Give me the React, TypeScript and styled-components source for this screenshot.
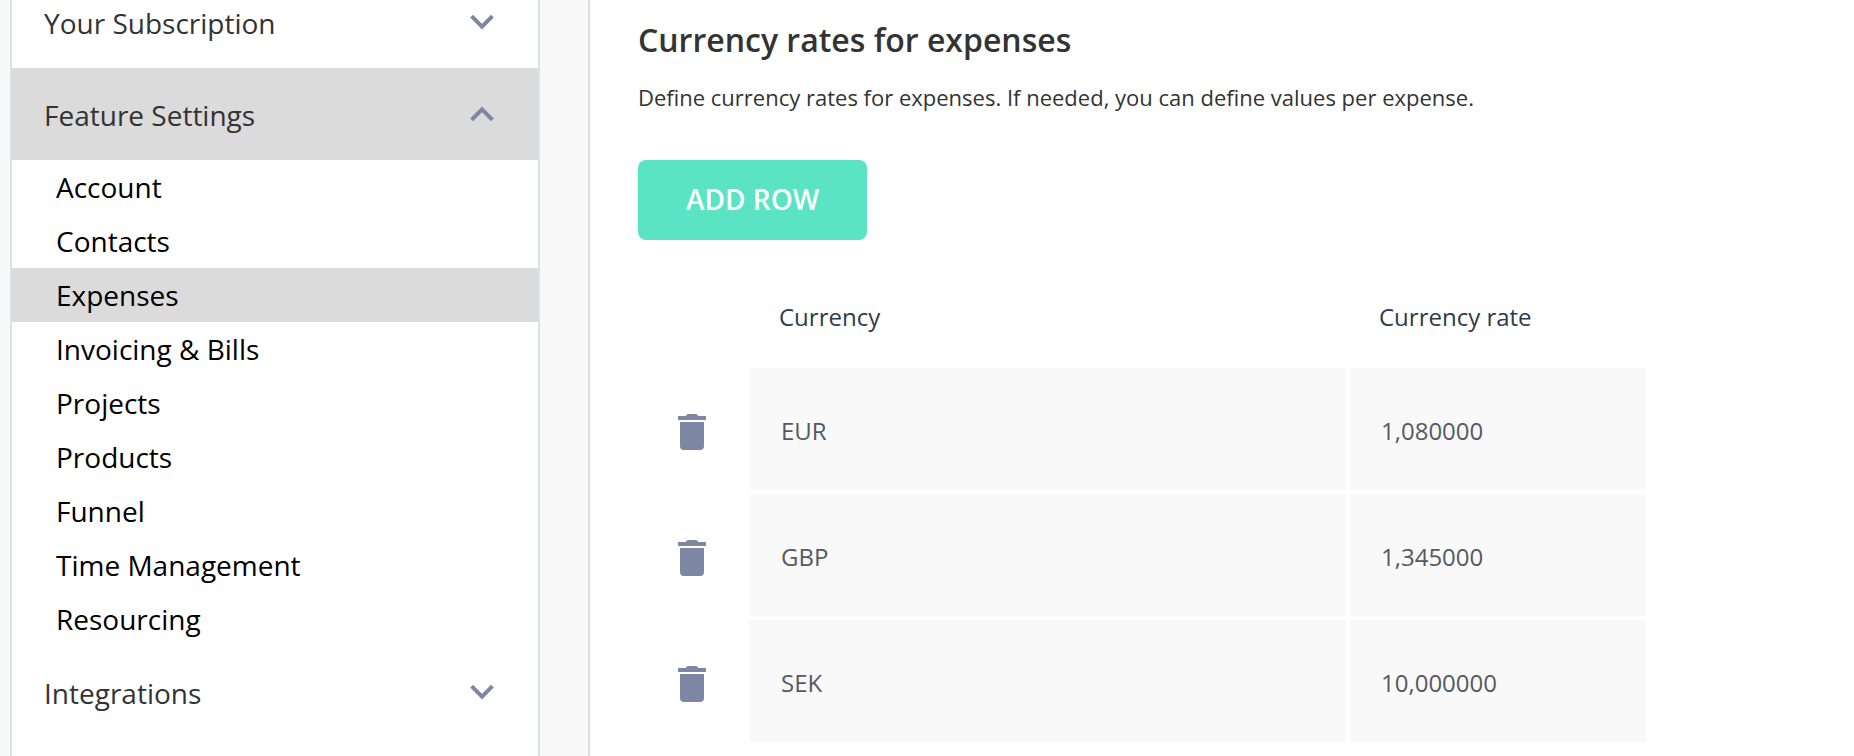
import React, { useState } from "react";
import styled, { createGlobalStyle } from "styled-components";

const GlobalStyle = createGlobalStyle`
  *, *::before, *::after { box-sizing: border-box; }
  html, body { margin: 0; padding: 0; }
  body {
    background: #f9f9f9;
    color: #333333;
    font-family: "Open Sans", "Noto Sans", sans-serif;
    overflow: hidden;
  }
`;

const Layout = styled.div`
  display: flex;
  align-items: stretch;
  gap: 48px;
  height: 100vh;
  padding-left: 10px;
  overflow: hidden;
`;

const Sidebar = styled.nav`
  flex: 0 0 530px;
  margin-top: -24px;
  background: #ffffff;
  border: solid #dde1ea;
  border-width: 0 2px;
`;

const SectionButton = styled.button<{ $open: boolean }>`
  display: flex;
  align-items: center;
  justify-content: space-between;
  width: 100%;
  padding: 28px 44px 26px 32px;
  border: 0;
  background: ${({ $open }) => ($open ? "#dbdbdb" : "#ffffff")};
  color: #333333;
  font: inherit;
  font-size: 28px;
  line-height: 38px;
  text-align: left;
  cursor: pointer;
`;

const ChevronIcon = styled.svg<{ $up: boolean }>`
  width: 24px;
  height: 18px;
  margin-bottom: 2px;
  fill: none;
  stroke: #7d87a3;
  stroke-width: 4;
  transform: ${({ $up }) => ($up ? "rotate(180deg)" : "none")};
`;

const LinkList = styled.ul`
  margin: 0;
  padding: 0;
  list-style: none;
`;

const SideLink = styled.a<{ $active: boolean }>`
  display: block;
  padding: 8px 44px;
  background: ${({ $active }) => ($active ? "#dbdbdb" : "transparent")};
  color: #000000;
  font-size: 28px;
  line-height: 38px;
  text-decoration: none;
`;

const Panel = styled.main`
  flex: 1;
  min-width: 0;
  padding: 18px 48px 0;
  background: #ffffff;
  border-left: 2px solid #dde1ea;
`;

const Title = styled.h1`
  margin: 0 0 20px;
  font-size: 32px;
  font-weight: 600;
  line-height: 44px;
`;

const Description = styled.p`
  margin: 0 0 48px;
  font-size: 22px;
  line-height: 30px;
`;

const AddButton = styled.button`
  display: block;
  padding: 20px 48px 22px;
  border: 0;
  border-radius: 8px;
  background: #5ae4c4;
  color: #ffffff;
  font: inherit;
  font-size: 28px;
  font-weight: 600;
  line-height: 38px;
  cursor: pointer;
`;

const RatesTable = styled.table`
  width: 100%;
  max-width: 1016px;
  margin: 40px 0 0 -4px;
  table-layout: fixed;
  border-collapse: separate;
  border-spacing: 4px;
  font-size: 24px;
  line-height: 32px;
`;

const ActionCol = styled.col`
  width: 108px;
`;

const RateCol = styled.col`
  width: 296px;
`;

const HeadCell = styled.th`
  padding: 17px 29px 31px;
  color: #2f3b48;
  font-weight: 400;
  text-align: left;
`;

const ActionCell = styled.td`
  padding: 0 0 0 16px;
  text-align: center;
  vertical-align: middle;
`;

const DataCell = styled.td`
  padding: 47px 31px 43px;
  background: #f9f9f9;
  color: #575962;
`;

const DeleteButton = styled.button`
  display: block;
  margin: 6px 0 0 16px;
  padding: 4px 8px;
  border: 0;
  background: transparent;
  cursor: pointer;
`;

const TrashIcon = styled.svg`
  display: block;
  width: 28px;
  height: 36px;
  fill: #7d87a3;
`;

function Chevron({ up }: { up: boolean }) {
  return (
    <ChevronIcon $up={up} viewBox="0 0 24 18" aria-hidden="true">
      <path d="M1.600 3.200 12 13.600 22.400 3.200" />
    </ChevronIcon>
  );
}

interface SectionProps {
  label: string;
  open: boolean;
  onToggle: () => void;
}

function Section({ label, open, onToggle }: SectionProps) {
  return (
    <SectionButton type="button" $open={open} aria-expanded={open} onClick={onToggle}>
      {label}
      <Chevron up={open} />
    </SectionButton>
  );
}

const featureLinks = [
  "Account",
  "Contacts",
  "Expenses",
  "Invoicing & Bills",
  "Projects",
  "Products",
  "Funnel",
  "Time Management",
  "Resourcing",
];

const initialRates = [
  { currency: "EUR", rate: "1,080000" },
  { currency: "GBP", rate: "1,345000" },
  { currency: "SEK", rate: "10,000000" },
];

export default function App() {
  const [open, setOpen] = useState("Feature Settings");
  const [rates, setRates] = useState(initialRates);
  const toggle = (name: string) => setOpen(open === name ? "" : name);

  return (
    <>
      <GlobalStyle />
      <Layout>
        <Sidebar aria-label="Settings">
          <Section
            label="Your Subscription"
            open={open === "Your Subscription"}
            onToggle={() => toggle("Your Subscription")}
          />
          <Section
            label="Feature Settings"
            open={open === "Feature Settings"}
            onToggle={() => toggle("Feature Settings")}
          />
          {open === "Feature Settings" && (
            <LinkList>
              {featureLinks.map((name) => (
                <li key={name}>
                  <SideLink href="#" $active={name === "Expenses"}>
                    {name}
                  </SideLink>
                </li>
              ))}
            </LinkList>
          )}
          <Section
            label="Integrations"
            open={open === "Integrations"}
            onToggle={() => toggle("Integrations")}
          />
        </Sidebar>
        <Panel>
          <Title>Currency rates for expenses</Title>
          <Description>
            Define currency rates for expenses. If needed, you can define values per expense.
          </Description>
          <AddButton
            type="button"
            onClick={() => setRates([...rates, { currency: "", rate: "" }])}
          >
            ADD ROW
          </AddButton>
          <RatesTable>
            <colgroup>
              <ActionCol />
              <col />
              <RateCol />
            </colgroup>
            <thead>
              <tr>
                <td />
                <HeadCell scope="col">Currency</HeadCell>
                <HeadCell scope="col">Currency rate</HeadCell>
              </tr>
            </thead>
            <tbody>
              {rates.map(({ currency, rate }, index) => (
                <tr key={index}>
                  <ActionCell>
                    <DeleteButton
                      type="button"
                      aria-label={`Delete ${currency}`}
                      onClick={() => setRates(rates.filter((_, i) => i !== index))}
                    >
                      <TrashIcon viewBox="0 0 28 36" aria-hidden="true">
                        <path d="M0 2h7.500l2-2h9l2 2H28v4H0zM2 8h24v24q0 4-4 4H6q-4 0-4-4z" />
                      </TrashIcon>
                    </DeleteButton>
                  </ActionCell>
                  <DataCell>{currency}</DataCell>
                  <DataCell>{rate}</DataCell>
                </tr>
              ))}
            </tbody>
          </RatesTable>
        </Panel>
      </Layout>
    </>
  );
}
